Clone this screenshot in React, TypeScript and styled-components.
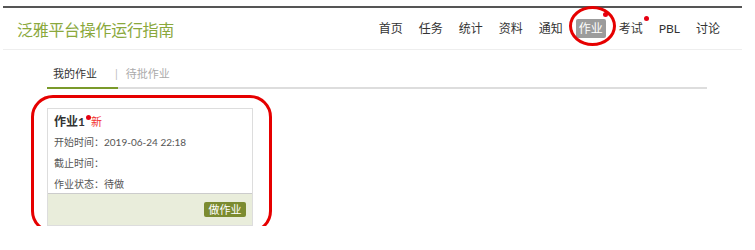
import styled, { createGlobalStyle } from "styled-components";

const navItems = ["首页", "任务", "统计", "资料", "通知", "作业", "考试", "PBL", "讨论"];

const App = () => {
    return (
        <>
            <GlobalStyle />
            <Page>
                <Header>
                    <Logo>泛雅平台操作运行指南</Logo>
                    <Nav>
                        {navItems.map((item) => (
                            <NavItem key={item} active={item === "作业"}>
                                {item}
                                {(item === "作业" || item === "考试") && <NavDot active={item === "作业"} />}
                                {item === "作业" && <CircleMark />}
                            </NavItem>
                        ))}
                    </Nav>
                </Header>
                <Content>
                    <Tabs>
                        <Tab active>我的作业</Tab>
                        <Sep>|</Sep>
                        <Tab>待批作业</Tab>
                    </Tabs>
                    <CardWrap>
                        <Card>
                            <CardBody>
                                <CardTitle>
                                    作业1<TitleDot />
                                    <New>新</New>
                                </CardTitle>
                                <Row>开始时间：2019-06-24 22:18</Row>
                                <Row>截止时间：</Row>
                                <Row>作业状态：待做</Row>
                            </CardBody>
                            <CardFooter>
                                <DoButton>做作业</DoButton>
                            </CardFooter>
                        </Card>
                        <RectMark />
                    </CardWrap>
                </Content>
            </Page>
        </>
    );
};

const GlobalStyle = createGlobalStyle`
    body {
        margin: 0;
        background: #fff;
        font-family: "Lato", "Noto Sans CJK SC", sans-serif;
    }
`;

const Page = styled.div`
    margin: 6px 13px 0 3px;
    border-top: 2px solid #555;
`;

const Header = styled.div`
    height: 41px;
    display: flex;
    align-items: center;
    justify-content: space-between;
    padding: 0 19px 0 14px;
    border-bottom: 1px solid #eee;
`;

const Logo = styled.div`
    font-size: 16px;
    color: #8aa83c;
    letter-spacing: -0.3px;
`;

const Nav = styled.div`
    display: flex;
    align-items: center;
    gap: 10px;
`;

const NavItem = styled.div<{ active?: boolean }>`
    position: relative;
    font-size: 12px;
    line-height: 15px;
    padding: 2px 3px;
    border-radius: 2px;
    color: ${(p) => (p.active ? "#fff" : "#333")};
    background: ${(p) => (p.active ? "#9c9c9c" : "transparent")};
`;

const NavDot = styled.span<{ active?: boolean }>`
    position: absolute;
    width: 5px;
    height: 5px;
    border-radius: 50%;
    background: #e60012;
    right: ${(p) => (p.active ? "-2px" : "-3px")};
    top: ${(p) => (p.active ? "-7px" : "-3px")};
`;

const CircleMark = styled.span`
    position: absolute;
    left: -7px;
    right: -10px;
    top: -13px;
    bottom: -8px;
    border: 3px solid #e60000;
    border-radius: 50%;
`;

const Content = styled.div`
    padding: 16px 35px 0 44px;
`;

const Tabs = styled.div`
    display: flex;
    align-items: flex-start;
    border-bottom: 2px solid #ddd;
    font-size: 11px;
    line-height: 16px;
`;

const Tab = styled.div<{ active?: boolean }>`
    padding: ${(p) => (p.active ? "0 21px 5px 6px" : "0 0 5px 0")};
    margin-bottom: -2px;
    border-bottom: 2px solid ${(p) => (p.active ? "#7a9a2a" : "transparent")};
    color: ${(p) => (p.active ? "#333" : "#aaa")};
`;

const Sep = styled.div`
    color: #bbb;
    margin: 0 8px 0 -3px;
`;

const CardWrap = styled.div`
    position: relative;
    width: 206px;
    margin-top: 19px;
`;

const Card = styled.div`
    border: 1px solid #ddd;
    background: #fff;
`;

const CardBody = styled.div`
    box-sizing: border-box;
    height: 84px;
    padding: 3px 6px 0;
    color: #555;
    font-size: 10px;
`;

const CardTitle = styled.div`
    position: relative;
    line-height: 20px;
    font-size: 12px;
    font-weight: bold;
    color: #333;
`;

const TitleDot = styled.span`
    display: inline-block;
    width: 5px;
    height: 5px;
    border-radius: 50%;
    background: #e60012;
    vertical-align: 6px;
    margin-left: 1px;
`;

const New = styled.span`
    color: #f23030;
    font-weight: normal;
    font-size: 11px;
`;

const Row = styled.div`
    line-height: 21px;
`;

const CardFooter = styled.div`
    display: flex;
    justify-content: flex-end;
    background: #e9eddb;
    border-top: 1px solid #ccc;
    padding: 8px 6px 8px;
`;

const DoButton = styled.div`
    background: #7b8b30;
    color: #fff;
    font-size: 11px;
    line-height: 15px;
    width: 42px;
    text-align: center;
    border-radius: 2px;
`;

const RectMark = styled.div`
    position: absolute;
    left: -16px;
    right: -19px;
    top: -13px;
    bottom: -7px;
    border: 3px solid #e60000;
    border-radius: 22px;
    pointer-events: none;
`;

export default App;
